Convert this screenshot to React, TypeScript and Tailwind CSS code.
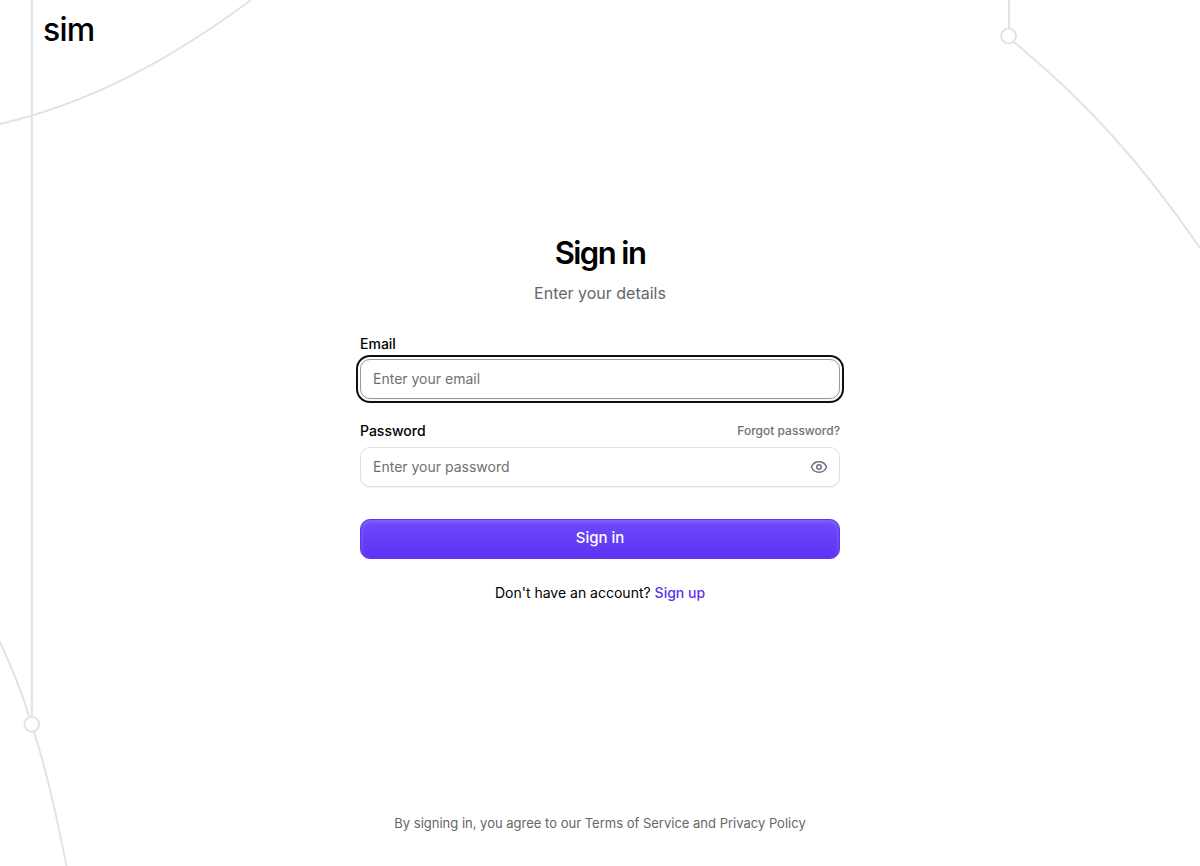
import { useState } from "react";
import { Eye, EyeOff } from "lucide-react";

function Background() {
  return (
    <svg
      aria-hidden="true"
      className="pointer-events-none absolute inset-0 h-full w-full"
      viewBox="0 0 1200 866"
      preserveAspectRatio="none"
      fill="none"
      stroke="#e1e1ec"
      strokeWidth="1.9"
    >
      <path d="M0 124C86 104 166 63 251 0" />
      <path d="M31.8 0V716" />
      <path d="M0 642C11 666 21 690 29 716" />
      <path d="M34 732C48 775 58 824 66.5 866" />
      <circle cx="31.8" cy="724.3" r="7.4" fill="#fff" />
      <path d="M1009 0V28" />
      <circle cx="1008.6" cy="36" r="7.4" fill="#fff" />
      <path d="M1014 42C1088 103 1143 165 1200 248" />
    </svg>
  );
}

export default function App() {
  const [visible, setVisible] = useState(false);

  return (
    <div className="relative flex min-h-screen flex-col bg-white font-['Inter',sans-serif] text-black">
      <Background />
      <header className="relative px-[43px] pt-[10px]">
        <a href="#" className="block w-fit text-[32px] font-medium leading-10 tracking-tight">
          sim
        </a>
      </header>
      <main className="relative mx-auto flex w-full max-w-lg flex-1 flex-col justify-center px-4 pb-7">
        <div className="text-center">
          <h1 className="text-[31px] font-semibold leading-10 tracking-tighter">Sign in</h1>
          <p className="mt-2 text-base text-[#666]">Enter your details</p>
        </div>

        <form className="mt-8" onSubmit={(e) => e.preventDefault()}>
          <div className="flex flex-col gap-2">
            <label htmlFor="email" className="text-sm leading-none font-medium">
              Email
            </label>
            <input
              id="email"
              type="email"
              placeholder="Enter your email"
              className="h-10 w-full rounded-[10px] border border-[#9298a8] bg-white px-3 text-sm shadow-xs outline-2 outline-offset-2 outline-[#101010] placeholder:text-[#707070]"
            />
          </div>

          <div className="mt-6 flex flex-col gap-2">
            <div className="flex items-center justify-between">
              <label htmlFor="password" className="text-sm leading-4 font-medium">
                Password
              </label>
              <a href="#" className="text-xs leading-4 font-medium text-[#707070]">
                Forgot password?
              </a>
            </div>
            <div className="relative">
              <input
                id="password"
                type={visible ? "text" : "password"}
                placeholder="Enter your password"
                className="h-10 w-full rounded-[10px] border border-[#e0e0e0] bg-white pr-10 pl-3 text-sm shadow-xs placeholder:text-[#707070]"
              />
              <button
                type="button"
                aria-label={visible ? "Hide password" : "Show password"}
                onClick={() => setVisible(!visible)}
                className="absolute inset-y-0 right-3 flex items-center text-[#6b7280]"
              >
                {visible ? <EyeOff size={18} /> : <Eye size={18} />}
              </button>
            </div>
          </div>

          <button
            type="submit"
            className="mt-8 flex h-10 w-full items-center justify-center rounded-[10px] border border-[#5a34ef] bg-linear-to-b from-[#7048fa] to-[#5a34f4] pb-px text-[15px] font-medium text-white shadow-[inset_0_2px_4px_0_#8b63ff]"
          >
            Sign in
          </button>
        </form>

        <p className="mt-6 text-center text-sm">
          Don't have an account?{" "}
          <a href="#" className="font-medium text-[#5b32ef]">
            Sign up
          </a>
        </p>
      </main>
      <footer className="relative px-8 pb-[33px] text-center text-[13px] leading-5 text-[#666]">
        By signing in, you agree to our <a href="#">Terms of Service</a> and{" "}
        <a href="#">Privacy Policy</a>
      </footer>
    </div>
  );
}
